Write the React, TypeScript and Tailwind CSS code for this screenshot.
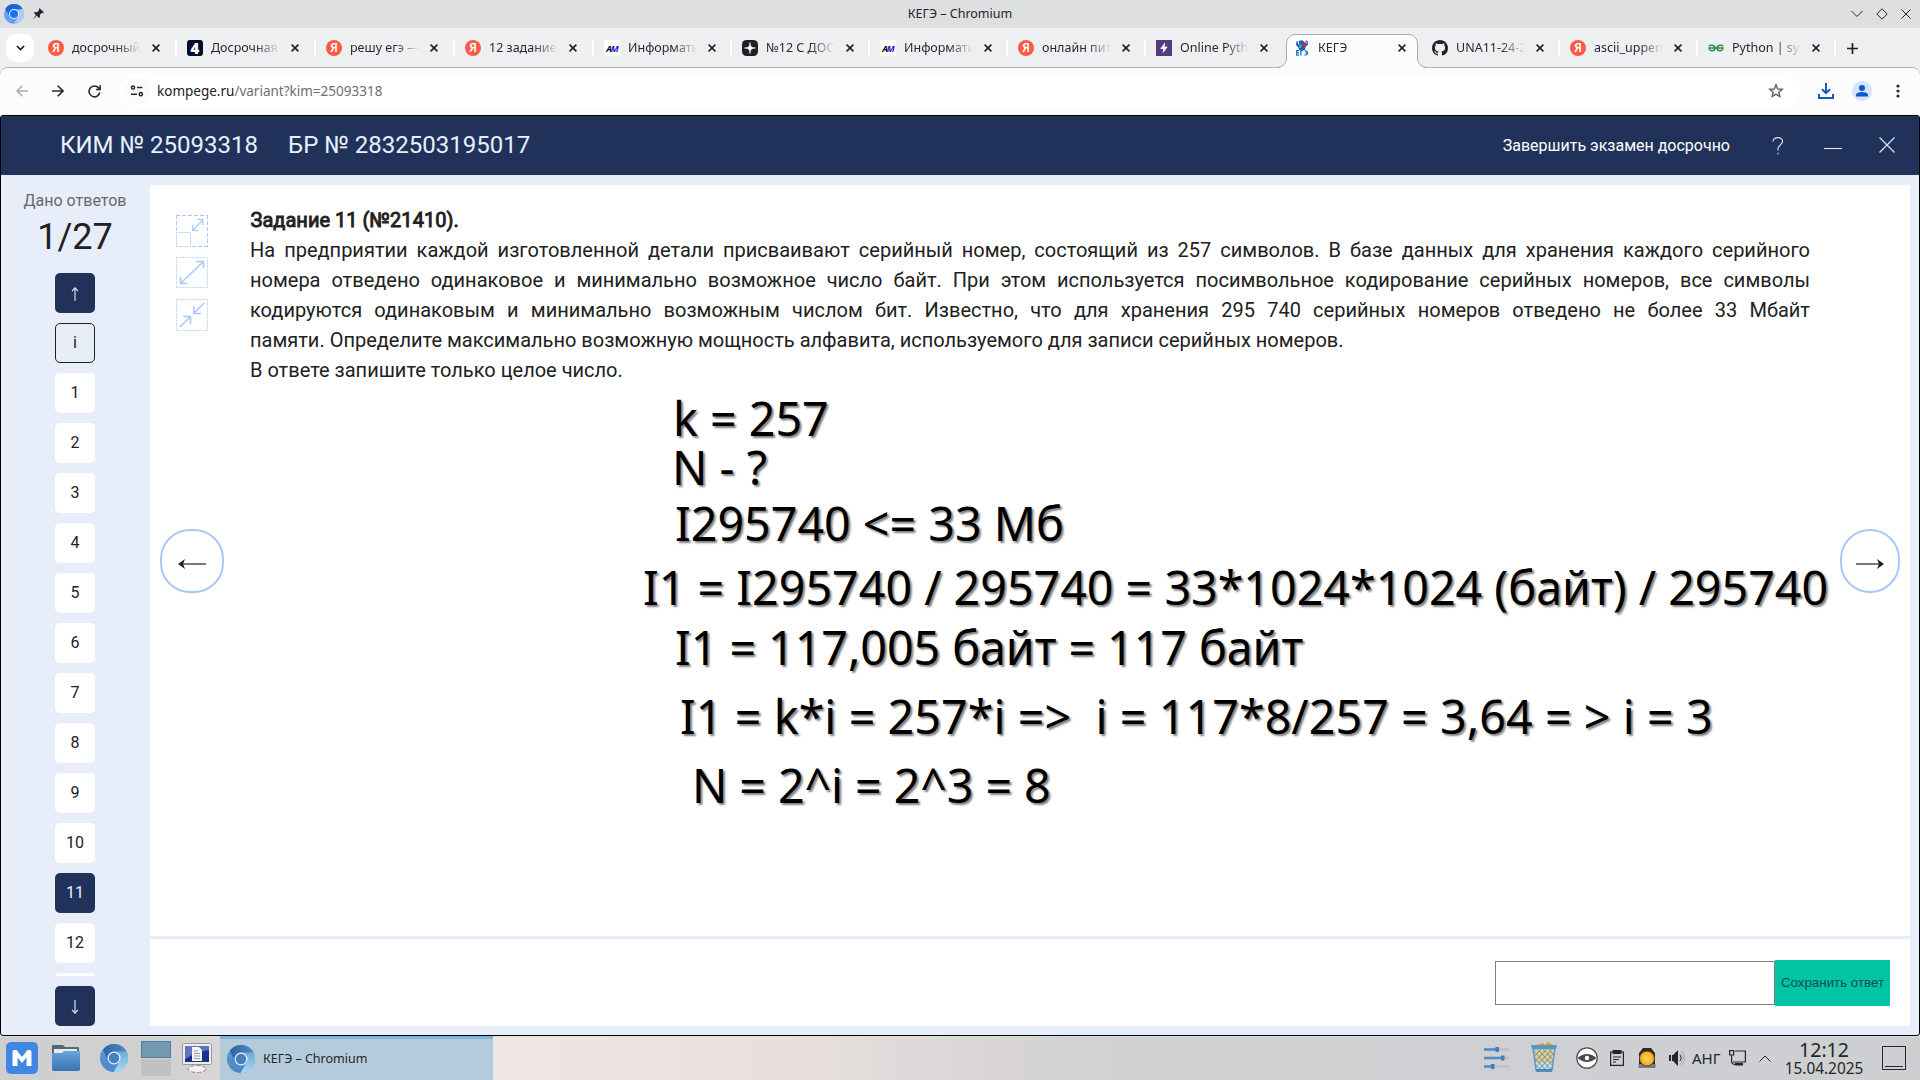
import React from "react";

type TabKind = "ya" | "four" | "am" | "star" | "bolt" | "kege" | "git" | "gfg";
const tabs: { kind: TabKind; title: string }[] = [
  { kind: "ya", title: "досрочный" },
  { kind: "four", title: "Досрочная в" },
  { kind: "ya", title: "решу егэ — П" },
  { kind: "ya", title: "12 задание е" },
  { kind: "am", title: "Информатик" },
  { kind: "star", title: "№12 С ДОСР" },
  { kind: "am", title: "Информатик" },
  { kind: "ya", title: "онлайн пито" },
  { kind: "bolt", title: "Online Pytho" },
  { kind: "kege", title: "КЕГЭ" },
  { kind: "git", title: "UNA11-24-25" },
  { kind: "ya", title: "ascii_upperc" },
  { kind: "gfg", title: "Python | sys" },
];

function Favicon({ kind }: { kind: TabKind }) {
  const box = "flex size-4 shrink-0 items-center justify-center overflow-hidden leading-none";
  switch (kind) {
    case "ya":
      return <span className={`${box} rounded-full bg-[#fc5a45] text-[12px] font-semibold text-white`}>Я</span>;
    case "four":
      return <span className={`${box} rounded-[3px] bg-[#050a30] font-['Open_Sans'] text-[15px] font-extrabold text-white`}>4</span>;
    case "am":
      return (
        <span className={`${box} bg-white text-[9px] font-bold italic tracking-[-1px] text-black`}>
          A<span className="text-[#2a12c4]">M</span>
        </span>
      );
    case "star":
      return (
        <svg viewBox="0 0 16 16" className="size-4 shrink-0">
          <rect width="16" height="16" rx="4.5" fill="#202124" />
          <path d="M8 2.5C8.3 6.7 9.3 7.7 13.5 8C9.3 8.3 8.3 9.3 8 13.5C7.7 9.3 6.7 8.3 2.5 8C6.7 7.7 7.7 6.7 8 2.5Z" fill="#fff" stroke="#fff" strokeWidth=".6" />
        </svg>
      );
    case "bolt":
      return (
        <svg viewBox="0 0 16 16" className="size-4 shrink-0">
          <rect width="16" height="16" fill="#563d7c" />
          <path d="M9 2.2L4.2 9H7.2L6.6 13.6L11.8 6.8H8.6L9 2.2Z" fill="#fff" />
        </svg>
      );
    case "kege":
      return (
        <svg viewBox="0 0 16 16" className="size-4 shrink-0">
          <path d="M4.500 1L8 .2L10.500 1.800L9.500 4L12.500 3.500L13 2H11.500V.8H13.500L14 4.500L11.500 7L11 10H5L4.500 7.500L2 5L2.500 1.500H4V4L5.500 4.500Z" fill="#1565b0" />
          <path d="M8.500 6L9.500 2.500L12.500 2.500L12 5.500L10.500 7.500Z" fill="#e02038" />
          <path d="M5.500 4.500H8L7 8H5Z" fill="#3fa9e0" />
          <path d="M5.200 10.600H2.700V15.200H5.200M2.700 12.900H5M6.800 15.400V10.600H9.300M10.500 10.800C14.500 10.400 14.500 15.400 10.500 15.200M11.300 12.900H13.600" fill="none" stroke="#1d7ac4" strokeWidth="1.300" />
        </svg>
      );
    case "git":
      return (
        <svg viewBox="0 0 16 16" className="size-4 shrink-0" fill="#1f2328">
          <path d="M8 0C3.58 0 0 3.58 0 8c0 3.54 2.29 6.53 5.47 7.59.4.07.55-.17.55-.38 0-.19-.01-.82-.01-1.49-2.01.37-2.53-.49-2.69-.94-.09-.23-.48-.94-.82-1.13-.28-.15-.68-.52-.01-.53.63-.01 1.08.58 1.23.82.72 1.21 1.87.87 2.33.66.07-.52.28-.87.51-1.07-1.78-.2-3.64-.89-3.64-3.95 0-.87.31-1.59.82-2.15-.08-.2-.36-1.02.08-2.12 0 0 .67-.21 2.2.82a7.6 7.6 0 014 0c1.53-1.04 2.2-.82 2.2-.82.44 1.1.16 1.92.08 2.12.51.56.82 1.27.82 2.15 0 3.07-1.87 3.75-3.65 3.95.29.25.54.73.54 1.48 0 1.07-.01 1.93-.01 2.2 0 .21.15.46.55.38A8.01 8.01 0 0016 8c0-4.42-3.58-8-8-8z" />
        </svg>
      );
    default:
      return (
        <svg viewBox="0 0 16 16" className="size-4 shrink-0" fill="none" stroke="#2f8d46" strokeWidth="1.5">
          <path d="M.8 6.2C2 4.8 6.8 4.6 7 8C6.8 11.8 1.6 11.8 1 8H15C14.4 11.8 9.2 11.8 9 8C9.2 4.6 14 4.8 15.2 6.2" />
        </svg>
      );
  }
}

function Cross() {
  return (
    <svg viewBox="0 0 8 8" className="size-2 shrink-0" stroke="#202124" strokeWidth="1.6">
      <path d="M.6 .6L7.4 7.4M7.4 .6L.6 7.4" />
    </svg>
  );
}

function TabStrip() {
  return (
    <div className="relative flex h-[39px] items-start bg-[#edeff1] pl-[6px]">
      <div className="mt-[6px] flex h-7 w-[28px] items-center justify-center rounded-[10px] bg-white">
        <svg viewBox="0 0 10 6" className="h-[6px] w-[9px]" fill="none" stroke="#202124" strokeWidth="1.9">
          <path d="M1 .8L5 4.8L9 .8" />
        </svg>
      </div>
      <div className="ml-1 flex">
        {tabs.map((tab, i) => {
          const active = tab.kind === "kege";
          const plainEdge = active || tabs[i + 1]?.kind === "kege";
          return (
            <div key={i} className={`relative flex h-[40px] items-center pl-[10px] ${i < 4 ? "w-[139px]" : "w-[138px]"}`}>
              {active && (
                <svg viewBox="0 0 150 35" className="absolute top-[6px] left-[-7px] h-[35px] w-[150px]">
                  <path d="M0 34.500C5 34 9.500 30 9.500 24V10C9.500 4 13 .5 19 .5H131C137 .5 140.500 4 140.500 10V24C140.500 30 145 34 150 34.500V35H0Z" fill="#fcfcfd" />
                  <path d="M0 33.500C5 33 9.500 30 9.500 24V10C9.500 4 13 .5 19 .5H131C137 .5 140.500 4 140.500 10V24C140.500 30 145 33 150 33.500" fill="none" stroke="#a9adb2" />
                </svg>
              )}
              <div className="relative flex items-center">
                <Favicon kind={tab.kind} />
                <span className="ml-2 w-[69px] overflow-hidden text-[12.500px] leading-5 whitespace-nowrap text-[#28292c] [mask-image:linear-gradient(to_right,#000_65%,transparent)]">
                  {tab.title}
                </span>
                <span className="ml-[11px] flex"><Cross /></span>
              </div>
              {!plainEdge && <span className="absolute top-3 right-0 h-4 w-[2px] bg-white" />}
            </div>
          );
        })}
      </div>
      <svg viewBox="0 0 11 11" className="mt-[15px] ml-[11px] size-[11px]" stroke="#202124" strokeWidth="1.7">
        <path d="M5.500 0V11M0 5.500H11" />
      </svg>
    </div>
  );
}

function TitleBar() {
  return (
    <div className="flex h-7 items-center justify-between bg-[#dedfe1] px-1">
      <div className="flex w-[100px] items-center gap-[8px]">
        <svg viewBox="0 0 20 20" className="size-5">
          <circle cx="10" cy="10" r="10" fill="#669df6" />
          <path d="M1.300 5A10 10 0 0 1 18.700 5H10Z" fill="#1a65d6" />
          <path d="M1.300 5L5.800 12.500L10 5Z" fill="#1a65d6" />
          <path d="M18.700 5A10 10 0 0 1 10 20L14.300 12.500L13 6.500Z" fill="#aecbfa" />
          <circle cx="10" cy="10" r="5" fill="#e8f0fe" />
          <circle cx="10" cy="10" r="4" fill="#1a73e8" />
        </svg>
        <svg viewBox="0 0 12 12" className="size-3">
          <path d="M7.500 0L12 4.500L10.800 5L9.300 5.300L7.800 7L8 9.300L7 10L4.800 7.800L.5 11.700L4 7L1.900 5L2.700 4L5 4.200L6.800 2.700L7 1.200Z" fill="#232629" />
        </svg>
      </div>
      <span className="text-[12.500px] text-[#232629]">КЕГЭ – Chromium</span>
      <div className="flex w-[100px] items-center justify-end gap-[13px] pr-[5px]">
        <svg viewBox="0 0 12 12" className="size-3" fill="none" stroke="#232629"><path d="M.5 3L6 8.500L11.500 3" /></svg>
        <svg viewBox="0 0 12 12" className="size-3" fill="none" stroke="#232629"><path d="M6 .8L11.200 6L6 11.200L.8 6Z" /></svg>
        <svg viewBox="0 0 10 10" className="size-[10px]" fill="none" stroke="#232629"><path d="M.5 .5L9.500 9.500M9.500 .5L.5 9.500" /></svg>
      </div>
    </div>
  );
}

function Toolbar() {
  return (
    <div className="flex h-12 items-center rounded-t-[8px] border-t border-[#b0b4b8] bg-[#fcfcfd] pb-px pl-4">
      <svg viewBox="0 0 12 12" className="size-3" fill="none" stroke="#a8aaad" strokeWidth="1.5"><path d="M12 6H1M6.300 .7L1 6L6.300 11.300" /></svg>
      <svg viewBox="0 0 12 12" className="ml-6 size-3" fill="none" stroke="#28292c" strokeWidth="1.6"><path d="M0 6H11M5.700 .7L11 6L5.700 11.300" /></svg>
      <svg viewBox="0 0 13 13" className="ml-6 size-[13px]" fill="none" stroke="#28292c" strokeWidth="1.6"><path d="M11.800 7.500A5.400 5.400 0 1 1 10.500 2.800L12 4.300M12.100 .3V4.500H7.900" /></svg>
      <div className="ml-[19px] flex h-[34px] w-[1681px] items-center rounded-full bg-white pl-[3px]">
        <span className="flex size-[28px] items-center justify-center rounded-full bg-[#fbfbfc]">
          <svg viewBox="0 0 14 12" className="h-3 w-[14px]" fill="none" stroke="#28292c" strokeWidth="1.5">
            <circle cx="3" cy="2.500" r="1.600" /><path d="M7 2.500H12.500M1 9.200H7" /><circle cx="10.800" cy="9.200" r="1.600" />
          </svg>
        </span>
        <span className="ml-[6px] text-[13.500px] text-[#202124]">kompege.ru<span className="text-[#6c6f73]">/variant?kim=25093318</span></span>
        <svg viewBox="0 0 16 16" className="mr-[17px] ml-auto size-4" fill="none" stroke="#5f6165" strokeWidth="1.4">
          <path d="M8 1.800L9.700 6L14.200 6.300L10.800 9.200L11.800 13.600L8 11.200L4.200 13.600L5.200 9.200L1.800 6.300L6.300 6Z" />
        </svg>
      </div>
      <svg viewBox="0 0 16 16" className="ml-[17px] size-4" fill="none" stroke="#1558c0" strokeWidth="2">
        <path d="M8 0V10M4 6.200L8 10.200L12 6.200M1 11V15H15V11" />
      </svg>
      <svg viewBox="0 0 20 20" className="ml-[18px] size-5">
        <circle cx="10" cy="10" r="10" fill="#d3e3fd" />
        <circle cx="10" cy="7" r="3" fill="#0b57d0" />
        <path d="M4 15.500V14C4 11.700 8 11 10 11S16 11.700 16 14V15.500Z" fill="#0b57d0" />
      </svg>
      <svg viewBox="0 0 4 14" className="ml-[24px] h-[14px] w-1" fill="#28292c">
        <circle cx="2" cy="2" r="1.600" /><circle cx="2" cy="7" r="1.600" /><circle cx="2" cy="12" r="1.600" />
      </svg>
    </div>
  );
}

function ExamHeader() {
  return (
    <header className="flex h-[59px] items-center bg-[#203259] pl-[59px] font-['Roboto',sans-serif] text-[#e6f0ff]">
      <span className="pb-[2px] text-[24px]">КИМ № 25093318</span>
      <span className="ml-[30px] pb-[2px] text-[24px]">БР № 2832503195017</span>
      <span className="ml-auto text-[16px] text-white">Завершить экзамен досрочно</span>
      <svg viewBox="0 0 12 18" className="ml-[42px] h-[18px] w-3" fill="none" stroke="#dfe7f5" strokeWidth="1.1">
        <path d="M1 4.500C1 -.8 11 -.5 10.500 4.600C10.200 7.500 6 8.500 6 11.800V13.600M6 15.800V17.500" />
      </svg>
      <svg viewBox="0 0 18 18" className="ml-[40px] size-[18px]" stroke="#dfe7f5" strokeWidth="1.100"><path d="M0 11.500H18" /></svg>
      <svg viewBox="0 0 16 16" className="mr-[24px] mb-[2px] ml-[37px] size-4" stroke="#dfe7f5" strokeWidth="1.200"><path d="M.5 .5L15.500 15.500M15.500 .5L.5 15.500" /></svg>
    </header>
  );
}

function ArrowGlyph({ down = false }: { down?: boolean }) {
  return (
    <svg viewBox="0 0 8 14" className={down ? "h-[14px] w-2 rotate-180" : "h-[14px] w-2"} fill="none" stroke="#e6f0ff" strokeWidth="1.100">
      <path d="M4 14V1" /><path d="M1 4.200L4 .8L7 4.200" />
    </svg>
  );
}

function Sidebar() {
  return (
    <aside className="flex w-[149px] flex-col items-center pt-[14px] pr-px font-['Roboto',sans-serif] text-[#212121]">
      <div className="text-[16px] leading-6 text-[#666a70]">Дано ответов</div>
      <div className="mt-[3px] text-[36px] leading-[42px]">1/27</div>
      <button className="mt-[15px] flex size-10 shrink-0 items-center justify-center rounded-[5px] bg-[#203259] pt-[2px]"><ArrowGlyph /></button>
      <div className="mt-[10px] flex h-[653px] flex-col gap-[10px] overflow-hidden text-[16px]">
        <button className="flex size-10 shrink-0 items-center justify-center rounded-[5px] border border-[#212121]">i</button>
        {Array.from({ length: 13 }, (_, k) => k + 1).map((n) => (
          <button key={n} className={n === 11 ? "flex size-10 shrink-0 items-center justify-center rounded-[5px] bg-[#203259] text-[#e6f0ff]" : "flex size-10 shrink-0 items-center justify-center rounded-[5px] bg-white"}>
            {n}
          </button>
        ))}
      </div>
      <button className="mt-[10px] flex size-10 shrink-0 items-center justify-center rounded-[5px] bg-[#203259] pt-[2px]"><ArrowGlyph down /></button>
    </aside>
  );
}

function ZoomTools() {
  return (
    <div className="flex flex-col gap-[10px]">
      <svg viewBox="0 0 32 32" className="size-8" fill="none" stroke="#aac8f8">
        <path d="M0 .5H32M.5 0V17M31.500 0V32M16 31.500H32" strokeDasharray="4 2" />
        <rect x=".5" y="17.500" width="14" height="14" stroke="#cddffb" />
        <path d="M17 15L27 5M21.500 4.500H27V10M16.500 10V15.500H22" strokeWidth="1.200" />
      </svg>
      <svg viewBox="0 0 32 32" className="size-8" fill="none" stroke="#aac8f8">
        <rect x=".5" y=".5" width="31" height="30" strokeDasharray="2 1" stroke="#bdd4fa" />
        <path d="M5 26L27 5M20 4.500H27.500V11M4.500 20V26.500H11" strokeWidth="1.600" />
      </svg>
      <svg viewBox="0 0 32 32" className="size-8" fill="none" stroke="#aac8f8">
        <rect x=".5" y=".5" width="31" height="31" strokeDasharray="2 1" stroke="#bdd4fa" />
        <path d="M28 4L18 14M18 7.500V14.500H25M4 28L14 18M7.500 17.500H14.500V25" strokeWidth="1.600" />
      </svg>
    </div>
  );
}

const notes = [
  { text: "k = 257", at: "left-[673px] top-[394px]" },
  { text: "N - ?", at: "left-[672px] top-[443px]" },
  { text: "I295740 <= 33 Мб", at: "left-[675px] top-[499px]" },
  { text: "I1 = I295740 / 295740 = 33*1024*1024 (байт) / 295740", at: "left-[643px] top-[563px]" },
  { text: "I1 = 117,005 байт = 117 байт", at: "left-[675px] top-[623px] tracking-[-0.05px]" },
  { text: "I1 = k*i = 257*i =>  i = 117*8/257 = 3,64 = > i = 3", at: "left-[680px] top-[692px] tracking-[0.07px]" },
  { text: "N = 2^i = 2^3 = 8", at: "left-[692px] top-[761px] tracking-[-0.08px]" },
];

function Task() {
  return (
    <section className="relative h-[751px] bg-white pt-5">
      <div className="flex">
        <div className="w-[100px] pt-[10px] pl-[26px]"><ZoomTools /></div>
        <div className="w-[1560px] font-['Roboto',sans-serif] text-[20px] leading-[30px] text-[#212121]">
          <p className="pl-[0.500px] tracking-[0.030px] [-webkit-text-stroke:0.900px_#212121]">Задание 11 (№21410).</p>
          <p className="text-justify [text-align-last:justify]">
            На предприятии каждой изготовленной детали присваивают серийный номер, состоящий из 257 символов. В базе данных для хранения каждого серийного номера отведено одинаковое и минимально возможное число байт. При этом используется посимвольное кодирование серийных номеров, все символы кодируются одинаковым и минимально возможным числом бит. Известно, что для хранения 295 740 серийных номеров отведено не более 33 Мбайт
          </p>
          <p>памяти. Определите максимально возможную мощность алфавита, используемого для записи серийных номеров.</p>
          <p>В ответе запишите только целое число.</p>
        </div>
      </div>
      <button className="absolute top-[344px] left-[10px] flex h-16 w-16 items-center justify-center rounded-[30px] border-2 border-[#a8c7fa] pt-[5px]">
        <svg viewBox="0 0 28 12" className="h-3 w-7" fill="none" stroke="#212121" strokeWidth="1.200"><path d="M28 6H2" /><path d="M7 1L0 6L7 11L5 6Z" fill="#212121" stroke="none" /></svg>
      </button>
      <button className="absolute top-[344px] right-[10px] flex h-16 w-[60px] items-center justify-center rounded-[30px] border-2 border-[#a8c7fa] pt-[5px]">
        <svg viewBox="0 0 28 12" className="h-3 w-7 rotate-180" fill="none" stroke="#212121" strokeWidth="1.200"><path d="M28 6H2" /><path d="M7 1L0 6L7 11L5 6Z" fill="#212121" stroke="none" /></svg>
      </button>
    </section>
  );
}

function AnswerBar() {
  return (
    <section className="mt-[3px] flex h-[87px] items-center justify-end bg-white pr-5">
      <input className="h-[44px] w-[280px] border border-[#808080] bg-white" />
      <button className="h-[46px] w-[115px] bg-[#00c4a3] font-['Liberation_Sans',sans-serif] text-[13.333px] whitespace-nowrap text-[#0f4d56]">Сохранить ответ</button>
    </section>
  );
}

function ChromiumIcon() {
  return (
    <svg viewBox="0 0 28 28" className="size-7">
      <defs>
        <linearGradient id="chA" x1="0" y1="0" x2="1" y2="0"><stop stopColor="#2f639f" /><stop offset="1" stopColor="#4f8cc6" /></linearGradient>
        <linearGradient id="chB" x1="0" y1="0" x2="0" y2="1"><stop stopColor="#5f9cd9" /><stop offset="1" stopColor="#4b86c5" /></linearGradient>
        <linearGradient id="chC" x1="0" y1="0" x2="0" y2="1"><stop stopColor="#6fa9d4" /><stop offset="1" stopColor="#a8dcf5" /></linearGradient>
      </defs>
      <circle cx="14" cy="14" r="14" fill="url(#chB)" />
      <path d="M3 5.500A14 14 0 0 1 26.500 7.500H14L8 17Z" fill="url(#chA)" />
      <path d="M26.500 7.500A14 14 0 0 1 13.500 28L19.500 17.500L17 7.500Z" fill="url(#chC)" />
      <circle cx="14" cy="14" r="6.500" fill="#e6f1fa" />
      <circle cx="14" cy="14" r="5.200" fill="#4380bd" />
    </svg>
  );
}

function Taskbar() {
  return (
    <footer className="flex h-11 items-stretch border-t border-[#dcdcdc] bg-[linear-gradient(to_right,#cecfcf_0,#d2d1d1_9%,#dcd7d6_12%,#eee7e4_26%,#e6dfdd_42%,#d3d1d2_56%,#cfd0d3_75%,#cdcfd1_100%)] text-[#232629]">
      <div className="flex w-[220px] items-center pb-px pl-[6px]">
        <svg viewBox="0 0 32 32" className="size-8">
          <rect width="32" height="32" rx="5" fill="#3f87e0" />
          <path d="M6.500 24V10Q6.500 8 8.500 8H10.500L16 15L21.500 8H23.500Q25.500 8 25.500 10V24H20.500V15.500L16 21L11.500 15.500V24Z" fill="#fff" />
        </svg>
        <svg viewBox="0 0 28 26" className="ml-[14px] h-[26px] w-7">
          <defs><linearGradient id="fld" x1="0" y1="0" x2="0" y2="1"><stop stopColor="#68a5e0" /><stop offset="1" stopColor="#3873b0" /></linearGradient></defs>
          <path d="M0 1Q0 0 1 0H11L13 2H26Q27 2 27 3V10H0Z" fill="#4e6b80" />
          <rect x="2" y="4" width="23" height="8" fill="#ece9e6" />
          <path d="M0 9Q0 8 1 8H10L12 6H27Q28 6 28 7V24Q28 26 26 26H2Q0 26 0 24Z" fill="url(#fld)" />
        </svg>
        <span className="ml-5"><ChromiumIcon /></span>
        <div className="ml-[13px] flex w-[30px] flex-col gap-[1px]">
          <div className="h-[17px] border border-[#55809d] bg-[#7399b1]" />
          <div className="h-[17px] bg-[#c1c1c1]" />
        </div>
        <svg viewBox="0 0 30 32" className="ml-[11px] h-8 w-[30px]">
          <path d="M11 23H19L20 27H10Z" fill="#c9c9c9" />
          <ellipse cx="15" cy="27" rx="9" ry="3.500" fill="#f2f2f2" stroke="#8a8a8a" strokeDasharray="4 2" />
          <rect x=".5" y="1.500" width="29" height="21" rx="1" fill="#ededed" stroke="#999" />
          <rect x="3" y="4" width="24" height="16" fill="#18338a" />
          <path d="M3 4H27V8Q14 10 3 17Z" fill="#5f74bb" />
          <path d="M10 5H17L20 8V19H10Z" fill="#f4f4f4" />
          <path d="M12 9H16M12 11.500H18M12 14H18M12 16.500H18" stroke="#9a9a9a" />
        </svg>
      </div>
      <div className="-mt-px flex w-[273px] items-center border-t-[3px] border-[#7fb3dc] bg-[#b4cbdc] pb-[2px] pl-[7px]">
        <ChromiumIcon />
        <span className="ml-2 pt-px text-[12.500px]">КЕГЭ – Chromium</span>
      </div>
      <div className="ml-auto flex items-center pb-px">
        <svg viewBox="0 0 25 24" className="h-6 w-[25px]">
          <path d="M0 3.500H25M0 12H25M0 20.500H25" stroke="#bfc0c2" strokeWidth="2.400" />
          <path d="M0 3.500H14M0 12H19M0 20.500H9" stroke="#4d8dcc" strokeWidth="2.400" />
          <path d="M11.500 1H15V6H11.500ZM17 9.500H20.500V14.500H17ZM7 18H10.500V23H7Z" fill="#3f7fc0" />
        </svg>
        <svg viewBox="0 0 26 30" className="mb-[3px] ml-[22px] h-[30px] w-[26px]">
          <defs><pattern id="mesh" width="5.500" height="6" patternUnits="userSpaceOnUse"><path d="M0 0L5.500 6M5.500 0L0 6" stroke="#649dcb" strokeWidth="1" /></pattern></defs>
          <path d="M3 4L12 1L14 3L17 0L23 4Z" fill="#f09a1c" />
          <path d="M2 6H24L21 28Q20.500 29.500 19 29.500H7Q5.500 29.500 5 28Z" fill="#ffd166" />
          <path d="M4 21H22L21 29H5Z" fill="#d6e4ee" />
          <path d="M2 6H24L21 28Q20.500 29.500 19 29.500H7Q5.500 29.500 5 28Z" fill="url(#mesh)" stroke="#5b97c9" strokeWidth="1.500" />
          <path d="M0 3H26L25 7H1Z" fill="#5796cc" />
          <path d="M5 27H21V29.500H5Z" fill="#4f86b0" />
        </svg>
        <svg viewBox="0 0 22 22" className="ml-[19px] size-[22px]">
          <circle cx="11" cy="11" r="10.200" fill="#fff" stroke="#4b4b4b" strokeWidth="1.200" />
          <path d="M1.500 11Q11 3 20.500 11Q11 19 1.500 11Z" fill="#4a4a4a" />
          <circle cx="11" cy="11" r="2.200" fill="#fff" />
        </svg>
        <svg viewBox="0 0 14 16" className="ml-3 h-4 w-[14px]" fill="none" stroke="#232629">
          <path d="M.6 2H13.400V15.400H.6Z" strokeWidth="1.200" /><path d="M2.500 0H11.500V4H2.500Z" fill="#232629" stroke="none" /><path d="M3 7H11M3 9.500H9M3 12H6" />
        </svg>
        <svg viewBox="0 0 18 20" className="ml-[14px] h-5 w-[18px]">
          <defs><radialGradient id="sun"><stop stopColor="#ffd65c" /><stop offset="1" stopColor="#f8a31a" /></radialGradient></defs>
          <path d="M1 5L5 0H13L17 5V17H1Z" fill="#2b2b2b" /><path d="M.5 16H17.500V20H.5Z" fill="#777b7e" /><circle cx="9" cy="10.500" r="7.500" fill="url(#sun)" stroke="#3a3226" strokeWidth=".8" />
        </svg>
        <svg viewBox="0 0 17 16" className="ml-[13px] h-4 w-[17px]" fill="none">
          <path d="M0 5H2V11H0ZM3 5H4L9 0V16L4 11H3Z" fill="#232629" /><path d="M11 5Q13.500 8 11 11" stroke="#232629" /><path d="M11.500 2.500Q16.500 8 11.500 13.500M12.500 .5Q19 8 12.500 15.500" stroke="#a9abad" />
        </svg>
        <span className="ml-[6px] w-[30px] text-[15px]">АНГ</span>
        <svg viewBox="0 0 17 16" className="ml-[7px] h-4 w-[17px]" fill="none" stroke="#232629" strokeWidth="1.200">
          <path d="M6 1H16.400V12H4" /><path d="M.6 .6H4.600V5H.6ZM2.600 5V11Q2.600 14.500 6 14.500H8" /><path d="M6 13H14V15.500H6Z" fill="#232629" stroke="none" />
        </svg>
        <svg viewBox="0 0 12 7" className="ml-[13px] h-[7px] w-3" fill="none" stroke="#232629"><path d="M.5 6.500L6 1L11.500 6.500" /></svg>
        <div className="ml-[10px] flex w-[86px] flex-col items-center">
          <span className="text-[19.500px] leading-[19px]">12:12</span>
          <span className="pt-px text-[15.400px] leading-[17px]">15.04.2025</span>
        </div>
        <svg viewBox="0 0 24 24" className="mr-[14px] ml-[15px] size-6" fill="none" stroke="#232629"><path d="M.5 .5H23.500V23.500H.5ZM3 20.500H21" /></svg>
      </div>
    </footer>
  );
}

export default function App() {
  return (
    <div className="relative flex h-[1080px] w-[1920px] flex-col overflow-hidden bg-[#edeff1] font-['Noto_Sans',sans-serif]">
      <TitleBar />
      <TabStrip />
      <Toolbar />
      <div className="flex h-[921px] flex-col rounded-[3px] border border-black bg-[#e7edf9]">
        <ExamHeader />
        <div className="flex flex-1">
          <Sidebar />
          <main className="mt-[10px] w-[1760px]">
            <Task />
            <AnswerBar />
          </main>
        </div>
      </div>
      <Taskbar />
      {notes.map((note) => (
        <div key={note.text} className={`absolute text-[46.600px] leading-[48px] whitespace-pre text-black [text-shadow:2px_2px_2px_rgba(0,0,0,0.5)] ${note.at}`}>
          {note.text}
        </div>
      ))}
    </div>
  );
}
